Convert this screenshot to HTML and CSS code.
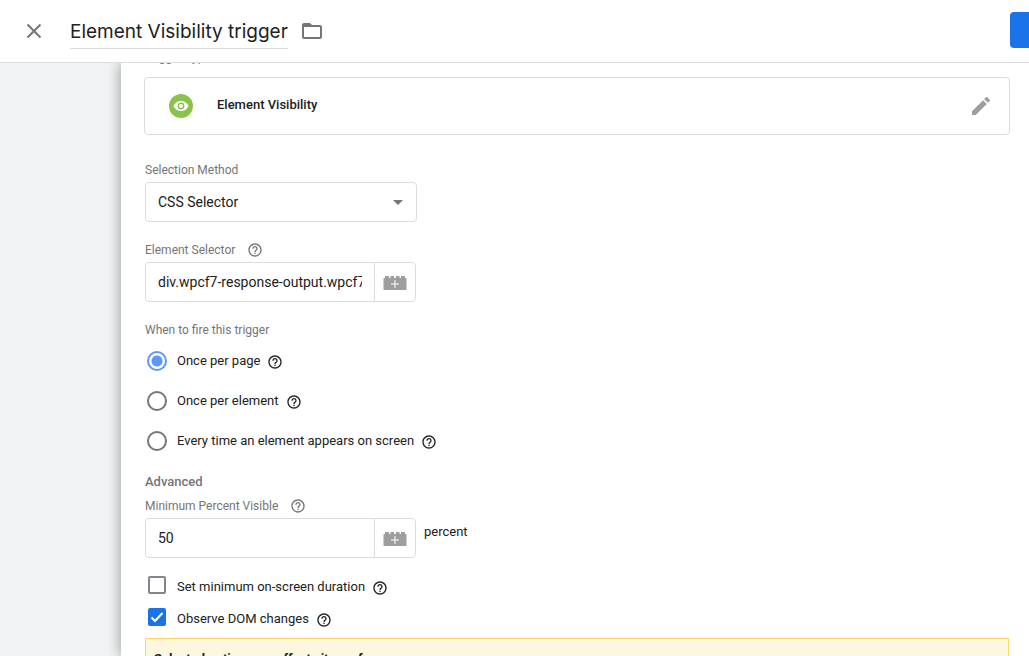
FILE: index.html
```html
<!DOCTYPE html>
<html lang="en">
<head>
	<meta charset="UTF-8">
	<title>Element Visibility trigger</title>
	<link rel="stylesheet" href="styles.css">
</head>
<body>
	<svg class="sprite" aria-hidden="true">
		<symbol id="help" viewBox="0 0 24 24">
			<path d="M11 18h2v-2h-2v2zm1-16C6.48 2 2 6.48 2 12s4.48 10 10 10 10-4.48 10-10S17.52 2 12 2zm0 18c-4.41 0-8-3.59-8-8s3.59-8 8-8 8 3.59 8 8-3.59 8-8 8zm0-14c-2.21 0-4 1.79-4 4h2c0-1.1.9-2 2-2s2 .9 2 2c0 2-3 1.75-3 5h2c0-2.25 3-2.5 3-5 0-2.21-1.79-4-4-4z"/>
		</symbol>
		<symbol id="brick" viewBox="0 0 24 16">
			<path fill="#9e9e9e" d="M1 4h1V2h4v2h1.500V2h3.500v2h2V2h3.500v2H18V2h4v2h1.500v12H.5V4z"/>
			<path stroke="#fff" d="M12 6v8M8 10h8"/>
		</symbol>
	</svg>

	<header class="header">
		<button class="icon-btn" aria-label="Close">
			<svg width="16" height="16" viewBox="0 0 16 16"><path d="M1.5 1.5l13 13m0-13l-13 13" fill="none" stroke="#757575" stroke-width="2"/></svg>
		</button>
		<h1 class="title">Element Visibility trigger</h1>
		<button class="icon-btn" aria-label="Move to folder">
			<svg width="24" height="24" viewBox="0 0 24 24"><path fill="#757575" d="M20 6h-8l-2-2H4c-1.100 0-1.990.9-1.990 2L2 18c0 1.100.9 2 2 2h16c1.100 0 2-.9 2-2V8c0-1.100-.9-2-2-2zm0 12H4V8h16v10z"/></svg>
		</button>
		<button class="save" aria-label="Save"></button>
	</header>

	<main class="main">
		<form class="panel">
			<p class="label type-label">Trigger Type</p>
			<div class="card">
				<svg width="24" height="24" viewBox="0 0 24 24">
					<circle cx="12" cy="12" r="12" fill="#8bc34a"/>
					<path fill="#fff" d="M12 7c-3.4 0-6.300 2-7.500 5 1.200 3 4.100 5 7.500 5s6.300-2 7.500-5c-1.200-3-4.100-5-7.500-5z"/>
					<circle cx="12" cy="12" r="2.700" fill="#fff" stroke="#8bc34a" stroke-width="1.400"/>
				</svg>
				<span class="card-name">Element Visibility</span>
				<button type="button" class="icon-btn" aria-label="Edit">
					<svg width="24" height="24" viewBox="0 0 24 24"><path fill="#9e9e9e" d="M3 17.250V21h3.750L17.810 9.940l-3.750-3.750L3 17.250zM20.710 7.040c.39-.39.39-1.020 0-1.410l-2.340-2.340c-.39-.39-1.020-.39-1.410 0l-1.830 1.830 3.750 3.750 1.830-1.830z"/></svg>
				</button>
			</div>

			<div class="field">
				<label class="label" for="method">Selection Method</label>
				<select id="method" class="select">
					<option>CSS Selector</option>
					<option>ID</option>
				</select>
			</div>

			<div class="field">
				<div class="label">
					<label for="selector">Element Selector</label>
					<svg class="help"><use href="#help"/></svg>
				</div>
				<div class="input-group">
					<input id="selector" type="text" value="div.wpcf7-response-output.wpcf7-mail-sent-ok">
					<button type="button" aria-label="Insert variable"><svg class="brick"><use href="#brick"/></svg></button>
				</div>
			</div>

			<fieldset class="field">
				<legend class="label">When to fire this trigger</legend>
				<div class="radios">
					<div class="option">
						<input type="radio" name="fire" id="fire-page" checked>
						<label for="fire-page">Once per page</label>
						<svg class="help"><use href="#help"/></svg>
					</div>
					<div class="option">
						<input type="radio" name="fire" id="fire-element">
						<label for="fire-element">Once per element</label>
						<svg class="help"><use href="#help"/></svg>
					</div>
					<div class="option">
						<input type="radio" name="fire" id="fire-every">
						<label for="fire-every">Every time an element appears on screen</label>
						<svg class="help"><use href="#help"/></svg>
					</div>
				</div>
			</fieldset>

			<h2 class="label advanced">Advanced</h2>
			<div class="label">
				<label for="percent">Minimum Percent Visible</label>
				<svg class="help"><use href="#help"/></svg>
			</div>
			<div class="percent-row">
				<div class="input-group">
					<input id="percent" type="text" value="50">
					<button type="button" aria-label="Insert variable"><svg class="brick"><use href="#brick"/></svg></button>
				</div>
				<span class="unit">percent</span>
			</div>

			<div class="checks">
				<div class="option">
					<input type="checkbox" id="duration">
					<label for="duration">Set minimum on-screen duration</label>
					<svg class="help"><use href="#help"/></svg>
				</div>
				<div class="option">
					<input type="checkbox" id="dom" checked>
					<label for="dom">Observe DOM changes</label>
					<svg class="help"><use href="#help"/></svg>
				</div>
			</div>

			<div class="notice">Selected option may affect site performance</div>
		</form>
	</main>
</body>
</html>
```
FILE: styles.css
```css
* {
	box-sizing: border-box;
}

body {
	margin: 0;
	height: 100vh;
	display: flex;
	flex-direction: column;
	overflow: hidden;
	font: 13px/16px Roboto, sans-serif;
	color: #212121;
	background: #f1f3f4;
}

h1, h2, p, fieldset, legend {
	margin: 0;
	padding: 0;
	border: 0;
}

button, input, select {
	font-family: inherit;
	color: inherit;
}

svg {
	display: block;
	flex: none;
}

.sprite {
	position: absolute;
	width: 0;
	height: 0;
}

.icon-btn {
	display: flex;
	padding: 0;
	border: 0;
	background: none;
}

/* header */
.header {
	flex: none;
	display: flex;
	align-items: center;
	height: 63px;
	padding-left: 26px;
	overflow: hidden;
	background: #fff;
	border-bottom: 1px solid #dadce0;
}

.title {
	margin: 2px 12px 0 28px;
	padding: 2px 0;
	border-bottom: 1px solid #dadce0;
	font: 19px/28px Inter, sans-serif;
	white-space: nowrap;
}

.save {
	flex: none;
	width: 80px;
	height: 36px;
	margin: 0 -61px 2px auto;
	border: 0;
	border-radius: 4px;
	background: #1a73e8;
}

/* sliding panel */
.main {
	flex: 1;
	min-height: 0;
	display: flex;
	overflow: hidden;
}

.panel {
	flex: 1;
	margin-left: 121px;
	padding: 0 20px 0 24px;
	background: #fff;
	box-shadow: 0 0 14px rgba(0, 0, 0, .4);
}

.label {
	display: flex;
	align-items: center;
	gap: 12px;
	margin-bottom: 4px;
	font-size: 12px;
	line-height: 16px;
	color: #757575;
}

.type-label {
	margin: -14px 0 12px;
}

.help {
	width: 16px;
	height: 16px;
	fill: currentColor;
}

.card {
	display: flex;
	align-items: center;
	height: 58px;
	padding: 0 16px 0 24px;
	border: 1px solid #dadce0;
	border-radius: 4px;
	margin: 0 -1px 27px;
}

.card-name {
	flex: 1;
	margin-left: 24px;
	padding-bottom: 2px;
	font-weight: 500;
}

.field {
	margin-bottom: 20px;
}

.select {
	appearance: none;
	display: block;
	width: 272px;
	height: 40px;
	padding: 0 12px;
	border: 1px solid #dadce0;
	border-radius: 4px;
	font-size: 14px;
	background: #fff url("data:image/svg+xml,%3Csvg xmlns='http://www.w3.org/2000/svg' width='10' height='5'%3E%3Cpath d='M0 0h10L5 5z' fill='%23757575'/%3E%3C/svg%3E") no-repeat right 13px center;
}

.input-group {
	display: flex;
	width: 271px;
	height: 40px;
	border: 1px solid #dadce0;
	border-radius: 4px;
}

.input-group input {
	flex: 1;
	min-width: 0;
	padding: 0;
	margin: 0 12px;
	border: 0;
	font-size: 14px;
	background: none;
}

.input-group button {
	display: flex;
	align-items: center;
	justify-content: center;
	width: 41px;
	padding: 0;
	border: 0;
	border-left: 1px solid #dadce0;
	background: none;
}

.brick {
	width: 24px;
	height: 16px;
}

/* radios and check boxes */
.option {
	display: flex;
	align-items: center;
	height: 20px;
}

.option input {
	appearance: none;
	flex: none;
	width: 20px;
	height: 20px;
	margin: 0 10px 0 2px;
	border: 2px solid #757575;
}

.option .help {
	margin: 2px 0 0 7px;
}

.radios {
	display: grid;
	gap: 20px;
	padding-top: 9px;
}

.option input[type="radio"] {
	border-radius: 50%;
}

.option input[type="radio"]:checked {
	border-color: #5e97f6;
	background: radial-gradient(circle, #5e97f6 5px, #fff 6px);
}

.checks {
	display: grid;
	gap: 12px;
	margin: 19px 0 9px;
}

.option input[type="checkbox"] {
	width: 18px;
	height: 18px;
	margin: 0 11px 4px 3px;
	border-color: #80868b;
	border-radius: 2px;
}

.option input[type="checkbox"]:checked {
	border: 0;
	background: #1a73e8 url("data:image/svg+xml,%3Csvg xmlns='http://www.w3.org/2000/svg' width='18' height='18'%3E%3Cpath d='M3.500 9.500l3.500 3.500 7.500-8' fill='none' stroke='%23fff' stroke-width='2'/%3E%3C/svg%3E") center;
}

.advanced {
	margin: 23px 0 8px;
	font-size: 13px;
	font-weight: 500;
}

.percent-row {
	display: flex;
	gap: 8px;
}

.unit {
	margin-top: 6px;
}

.notice {
	padding: 12px 8px;
	border: 1px solid #fdd663;
	background: #fef7e0;
	font-weight: 700;
}
```
